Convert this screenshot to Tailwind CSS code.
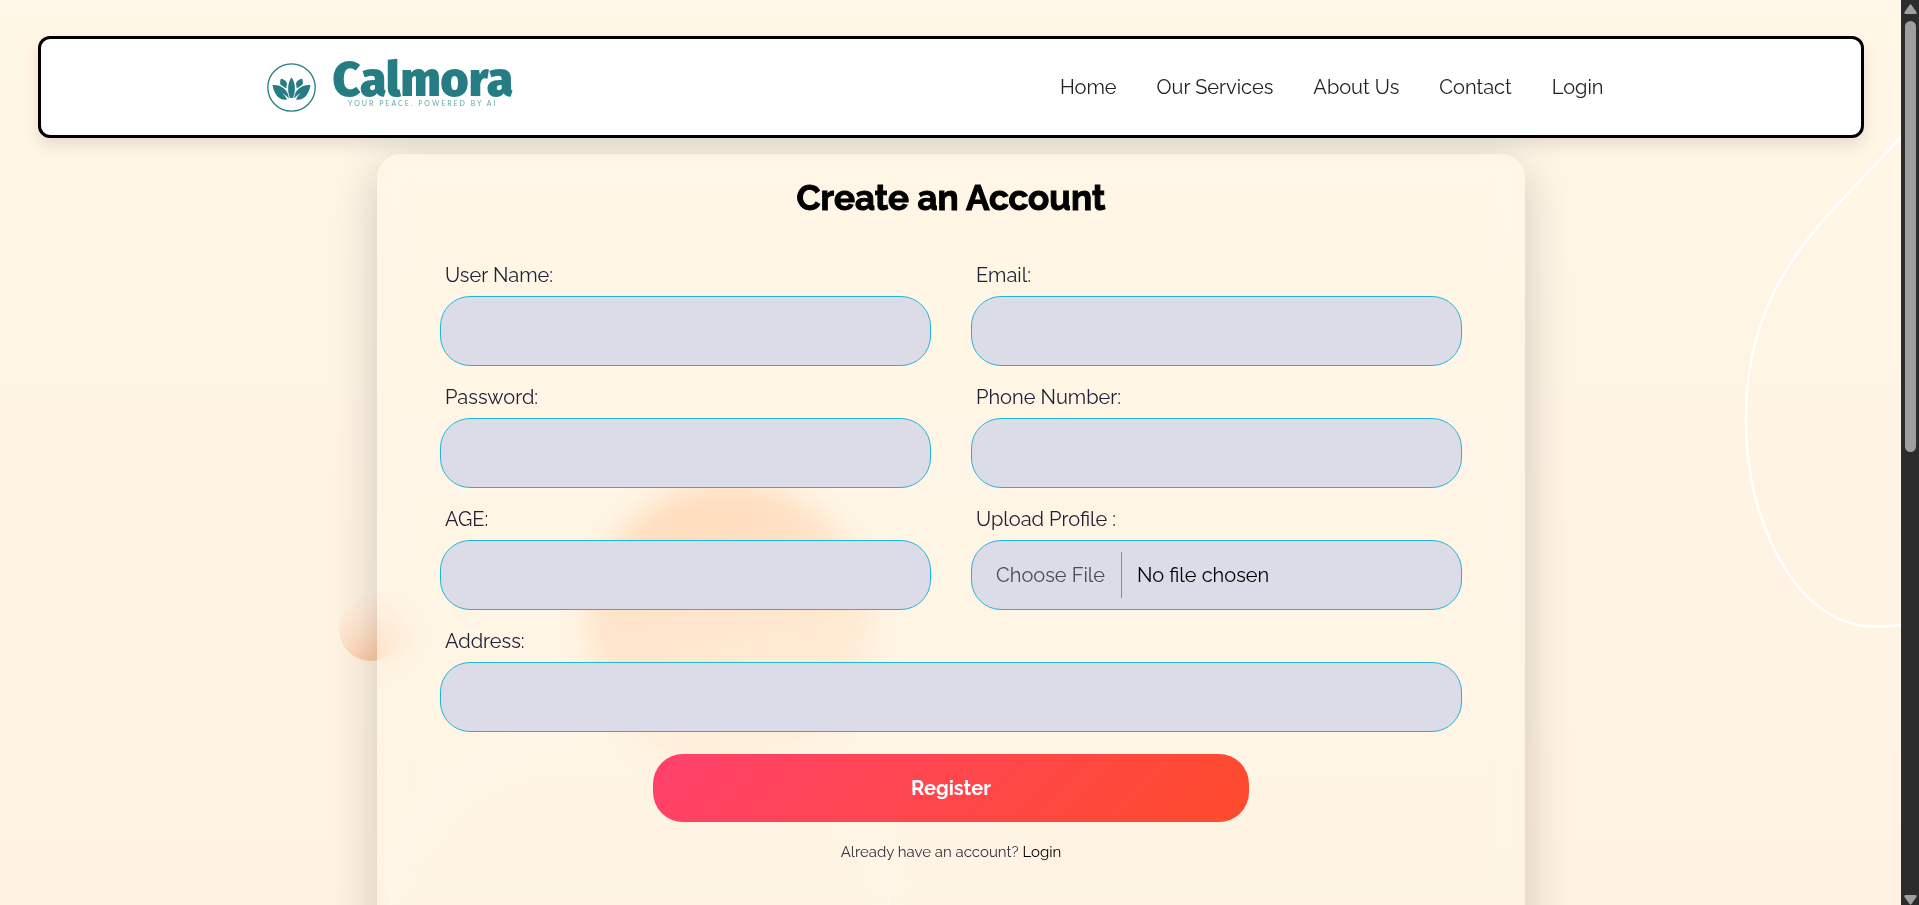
<!DOCTYPE html>
<html lang="en">
<head>
<meta charset="utf-8">
<meta name="viewport" content="width=device-width, initial-scale=1">
<title>Calmora - Create an Account</title>
<script src="https://cdn.jsdelivr.net/npm/@tailwindcss/browser@4"></script>
</head>
<body class="flex h-screen overflow-hidden bg-[#fff5e5] font-[Raleway,Lato,sans-serif] text-[#212529]">
<div class="relative flex-1 overflow-hidden bg-linear-to-b from-[#fff7e7] to-[#fff2e1] pt-9 pr-[37px] pl-[38px]">

  <!-- Background decoration -->
  <svg class="absolute right-0 top-0" width="180" height="660" viewBox="0 0 180 660" fill="none" aria-hidden="true">
    <path d="M182 135C155 164 130 190 106 216C62 265 25 325 25 418C25 517 68 603 126 622C143 628 160 627 182 625" stroke="#fff" stroke-width="2.5"/>
  </svg>
  <svg class="absolute left-0 top-0" width="1000" height="1200" viewBox="0 0 1000 1200" fill="none" aria-hidden="true">
    <defs>
      <linearGradient id="big" x1="0.3" y1="0" x2="0.6" y2="1"><stop stop-color="#ffc396"/><stop offset="1" stop-color="#ffe4c8" stop-opacity="0.5"/></linearGradient>
      <linearGradient id="small" x1="0.3" y1="0" x2="0.75" y2="1"><stop stop-color="#ffe9d4" stop-opacity="0.2"/><stop offset="1" stop-color="#ffc49c"/></linearGradient>
    </defs>
    <circle cx="730" cy="626" r="142" fill="url(#big)"/>
    <circle cx="371" cy="629" r="32" fill="url(#small)"/>
    <ellipse cx="640" cy="915" rx="250" ry="200" stroke="#fff" stroke-width="3"/>
  </svg>

  <header class="relative z-10 flex h-[102px] items-center justify-center rounded-xl border-3 border-black bg-white pr-8 shadow-[0_8px_16px_rgba(0,0,0,0.10)]">
    <div class="flex w-full max-w-[1337px] items-center justify-between">
      <a href="#" class="flex items-center gap-[17px] text-[#257d83]" aria-label="Calmora home">
        <svg width="49" height="49" viewBox="0 0 49 49" aria-hidden="true">
          <circle cx="24.500" cy="24.500" r="23.700" fill="none" stroke="currentColor" stroke-width="1.300"/>
          <g fill="currentColor">
            <path d="M24.500 14.500C28 19 29.300 27 26 35H23C19.700 27 21 19 24.500 14.500Z"/>
            <path d="M14 15.500C17.500 16.500 20 18.500 20 21C19.500 23 19.500 24 19.200 25.500L13.300 21.500C13 19 13.200 17 14 15.500Z"/>
            <path d="M35 15.500C31.500 16.500 29 18.500 29 21C29.500 23 29.500 24 29.800 25.500L35.700 21.500C36 19 35.800 17 35 15.500Z"/>
            <path d="M5.500 22C14 21.500 21 26 22 35.500C20.500 34 18 31.500 15 30C17.500 32 19 34 20 36.500C12 38 7 31 5.500 22Z"/>
            <path d="M43.500 22C35 21.500 28 26 27 35.500C28.500 34 31 31.500 34 30C31.500 32 30 34 29 36.500C37 38 42 31 43.500 22Z"/>
          </g>
        </svg>
        <span class="flex flex-col items-center pb-[5px]">
          <span class="font-['Fira_Sans',Roboto,sans-serif] text-[48px] leading-[37px] font-black">Calmora</span>
          <span class="font-[Lato] text-[7px] leading-[8px] tracking-[2px] text-[#257d83]/70">YOUR PEACE. POWERED BY AI</span>
        </span>
      </a>
      <nav class="flex gap-10 text-xl leading-[30px] text-[#222]">
        <a href="#">Home</a>
        <a href="#">Our Services</a>
        <a href="#">About Us</a>
        <a href="#">Contact</a>
        <a href="#">Login</a>
      </nav>
    </div>
  </header>

  <main class="relative mx-auto mt-4 h-[900px] max-w-[1148px] rounded-[24px] bg-[#fff8e8]/40 px-[63px] pt-6 shadow-[0_12px_50px_rgba(0,0,0,0.19)] backdrop-blur-[15px]">
    <h1 class="text-center text-[35px] leading-10 font-bold text-black [-webkit-text-stroke:1px_black]">Create an Account</h1>
    <form class="mt-[42px] grid grid-cols-2 gap-x-10 gap-y-4 text-xl leading-[30px] text-[#212134]" onsubmit="return false">
      <div class="flex flex-col gap-[6px]">
        <label for="name" class="pl-[5px]">User Name:</label>
        <input id="name" type="text" class="h-[70px] rounded-[30px] border border-[#1fb6d6] bg-[#dcdbe8] px-6">
      </div>
      <div class="flex flex-col gap-[6px]">
        <label for="email" class="pl-[5px]">Email:</label>
        <input id="email" type="email" class="h-[70px] rounded-[30px] border border-[#1fb6d6] bg-[#dcdbe8] px-6">
      </div>
      <div class="flex flex-col gap-[6px]">
        <label for="password" class="pl-[5px]">Password:</label>
        <input id="password" type="password" class="h-[70px] rounded-[30px] border border-[#1fb6d6] bg-[#dcdbe8] px-6">
      </div>
      <div class="flex flex-col gap-[6px]">
        <label for="phone" class="pl-[5px]">Phone Number:</label>
        <input id="phone" type="tel" class="h-[70px] rounded-[30px] border border-[#1fb6d6] bg-[#dcdbe8] px-6">
      </div>
      <div class="flex flex-col gap-[6px]">
        <label for="age" class="pl-[5px]">AGE:</label>
        <input id="age" type="text" class="h-[70px] rounded-[30px] border border-[#1fb6d6] bg-[#dcdbe8] px-6">
      </div>
      <div class="flex flex-col gap-[6px]">
        <label for="profile" class="pl-[5px]">Upload Profile :</label>
        <input id="profile" type="file" class="h-[70px] rounded-[30px] border border-[#1fb6d6] bg-[#dcdbe8] px-6 py-[11px] text-black file:mr-[15px] file:h-[46px] file:border-r file:border-[#1fb6d6] file:pr-4 file:text-[#4a4a5a]">
      </div>
      <div class="col-span-2 flex flex-col gap-[6px]">
        <label for="address" class="pl-[5px]">Address:</label>
        <input id="address" type="text" class="h-[70px] rounded-[30px] border border-[#1fb6d6] bg-[#dcdbe8] px-6">
      </div>
      <button type="submit" class="col-span-2 mt-[6px] h-[68px] w-7/12 justify-self-center rounded-[30px] bg-[linear-gradient(135deg,#ff416c,#ff4b2b)] font-bold text-white">Register</button>
    </form>
    <p class="mt-[18px] text-center text-[15px] leading-6 text-[#33333f]">Already have an account? <a href="#" class="text-black">Login</a></p>
  </main>
</div>

<!-- Page scrollbar -->
<aside class="flex w-[18px] flex-col items-center justify-between bg-[#2c2c2c]" aria-hidden="true">
  <div class="flex flex-col items-center gap-[7px] pt-1">
    <svg width="13" height="10" viewBox="0 0 13 10"><path d="M5.500 1Q6.500-.5 7.500 1L12.500 8Q13 10 11.500 10H1.500Q0 10 .5 8Z" fill="#9f9f9f"/></svg>
    <div class="h-[431px] w-[11px] rounded-full bg-[#9f9f9f]"></div>
  </div>
  <svg width="13" height="10" viewBox="0 0 13 10"><path d="M5.500 9Q6.500 10.500 7.500 9L12.500 2Q13 0 11.500 0H1.500Q0 0 .5 2Z" fill="#9f9f9f"/></svg>
</aside>
</body>
</html>
